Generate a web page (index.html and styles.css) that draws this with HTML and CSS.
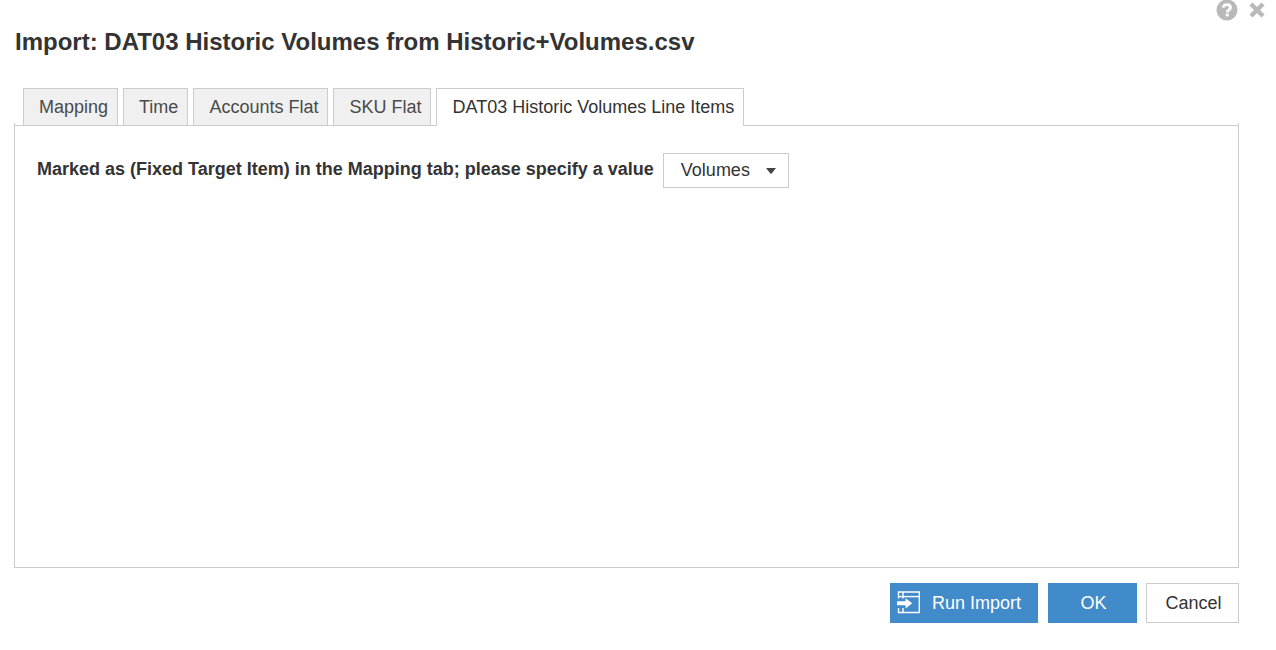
FILE: index.html
```
<!DOCTYPE html>
<html lang="en">
<head>
<meta charset="utf-8">
<title>Import: DAT03 Historic Volumes</title>
<link rel="stylesheet" href="styles.css">
</head>
<body>
<main class="dialog">
  <div class="window-tools">
    <button class="tool" type="button" aria-label="Help">
      <svg width="22" height="22" viewBox="0 0 22 22" aria-hidden="true">
        <circle cx="11" cy="10" r="10.5" fill="#b9b9b9"/>
        <path d="M7.4 7.6C7.5 5.6 9 4.7 11 4.7s3.5 1.1 3.5 3c0 2.3-3.2 2.3-3.2 4.7" fill="none" stroke="#fff" stroke-width="2.8"/>
        <rect x="9.8" y="13.6" width="3" height="2.8" fill="#fff"/>
      </svg>
    </button>
    <button class="tool" type="button" aria-label="Close">
      <svg width="16" height="22" viewBox="0 0 16 22" aria-hidden="true">
        <path d="M2 4l12 12M14 4L2 16" fill="none" stroke="#b9b9b9" stroke-width="4.4"/>
      </svg>
    </button>
  </div>
  <h1 class="title">Import: DAT03 Historic Volumes from Historic+Volumes.csv</h1>
  <div class="tabs" role="tablist">
    <button class="tab" type="button" role="tab" aria-selected="false">Mapping</button>
    <button class="tab" type="button" role="tab" aria-selected="false">Time</button>
    <button class="tab" type="button" role="tab" aria-selected="false">Accounts Flat</button>
    <button class="tab" type="button" role="tab" aria-selected="false">SKU Flat</button>
    <button class="tab tab-active" type="button" role="tab" id="tab-items" aria-selected="true" aria-controls="panel-items">DAT03 Historic Volumes Line Items</button>
  </div>
  <section class="panel" role="tabpanel" id="panel-items" aria-labelledby="tab-items">
    <div class="field">
      <label class="field-label" for="target">Marked as (Fixed Target Item) in the Mapping tab; please specify a value</label>
      <div class="select-wrap">
        <select class="select" id="target"><option>Volumes</option></select>
        <svg class="caret" width="10" height="6" viewBox="0 0 10 6" aria-hidden="true"><path d="M0 0h10L5.6 5.4Q5 6 4.4 5.4z" fill="#444"/></svg>
      </div>
    </div>
  </section>
  <footer class="actions">
    <button class="button button-run" type="button">
      <svg width="24" height="24" viewBox="0 0 24 24" aria-hidden="true">
        <g fill="none" stroke="#fff" stroke-width="1.4">
          <path d="M2.5 7.6V1h20.8v20.5H2.5V17"/>
          <path d="M2 5.6h21"/>
          <path d="M7 1v6.6M7 17v4.5"/>
        </g>
        <path d="M1 10.2h8.6V7.2l6.6 5.1-6.6 5.1v-3.1H1z" fill="#fff"/>
      </svg>
      Run Import
    </button>
    <button class="button button-ok" type="button">OK</button>
    <button class="button button-cancel" type="button">Cancel</button>
  </footer>
</main>
</body>
</html>
```
FILE: styles.css
```
* {
  box-sizing: border-box;
}

body {
  margin: 0;
  background: #fff;
  color: #333;
  font-family: "Liberation Sans", Arial, sans-serif;
  font-size: 18px;
  line-height: 22px;
}

button,
select {
  margin: 0;
  font: inherit;
  color: inherit;
}

.dialog {
  display: flex;
  flex-direction: column;
  min-height: 100vh;
  padding: 0 37px 27px 14px;
}

.window-tools {
  display: flex;
  justify-content: flex-end;
  gap: 11px;
  margin-right: -26px;
}

.tool {
  display: flex;
  padding: 0;
  border: 0;
  background: none;
}

.title {
  margin: 6px 0 32px 1px;
  font-size: 24px;
  line-height: 28px;
}

.tabs {
  display: flex;
  gap: 5px;
  padding-left: 9px;
}

.tab {
  height: 37px;
  padding: 0 9px 0 15px;
  border: 1px solid #ccc;
  border-bottom: 0;
  background: #f0f0f0;
  color: #4a4a4a;
  white-space: nowrap;
}

.tab-active {
  position: relative;
  z-index: 1;
  height: 38px;
  margin-bottom: -1px;
  padding-bottom: 1px;
  background: #fff;
  color: #333;
}

.panel {
  position: relative;
  flex: 1;
  padding: 27px 22px;
  border: 1px solid #ccc;
}

/* short stubs where the side borders rise above the top edge */
.panel::before {
  content: "";
  position: absolute;
  top: -3px;
  left: -1px;
  right: -1px;
  height: 2px;
  border: solid #ccc;
  border-width: 0 1px;
}

.field {
  display: flex;
  align-items: flex-start;
  gap: 9px;
}

.field-label {
  padding-top: 5px;
  font-weight: bold;
}

.select-wrap {
  position: relative;
}

.select {
  appearance: none;
  width: 126px;
  height: 35px;
  padding: 0 30px 2px 17px;
  border: 1px solid #ccc;
  border-radius: 0;
  background: #fff;
}

.caret {
  position: absolute;
  top: 15px;
  right: 13px;
  pointer-events: none;
}

.actions {
  display: flex;
  justify-content: flex-end;
  margin-top: 15px;
}

.button {
  height: 40px;
  padding: 0 0 0 2px;
  border: 1px solid #428bca;
  background: #428bca;
  color: #fff;
}

.button-run {
  display: flex;
  align-items: center;
  gap: 12px;
  margin-right: 10px;
  padding: 0 16px 0 5px;
}

.button-ok {
  width: 89px;
  margin-right: 9px;
}

.button-cancel {
  width: 93px;
  border-color: #ccc;
  background: #fff;
  color: #333;
}
```
